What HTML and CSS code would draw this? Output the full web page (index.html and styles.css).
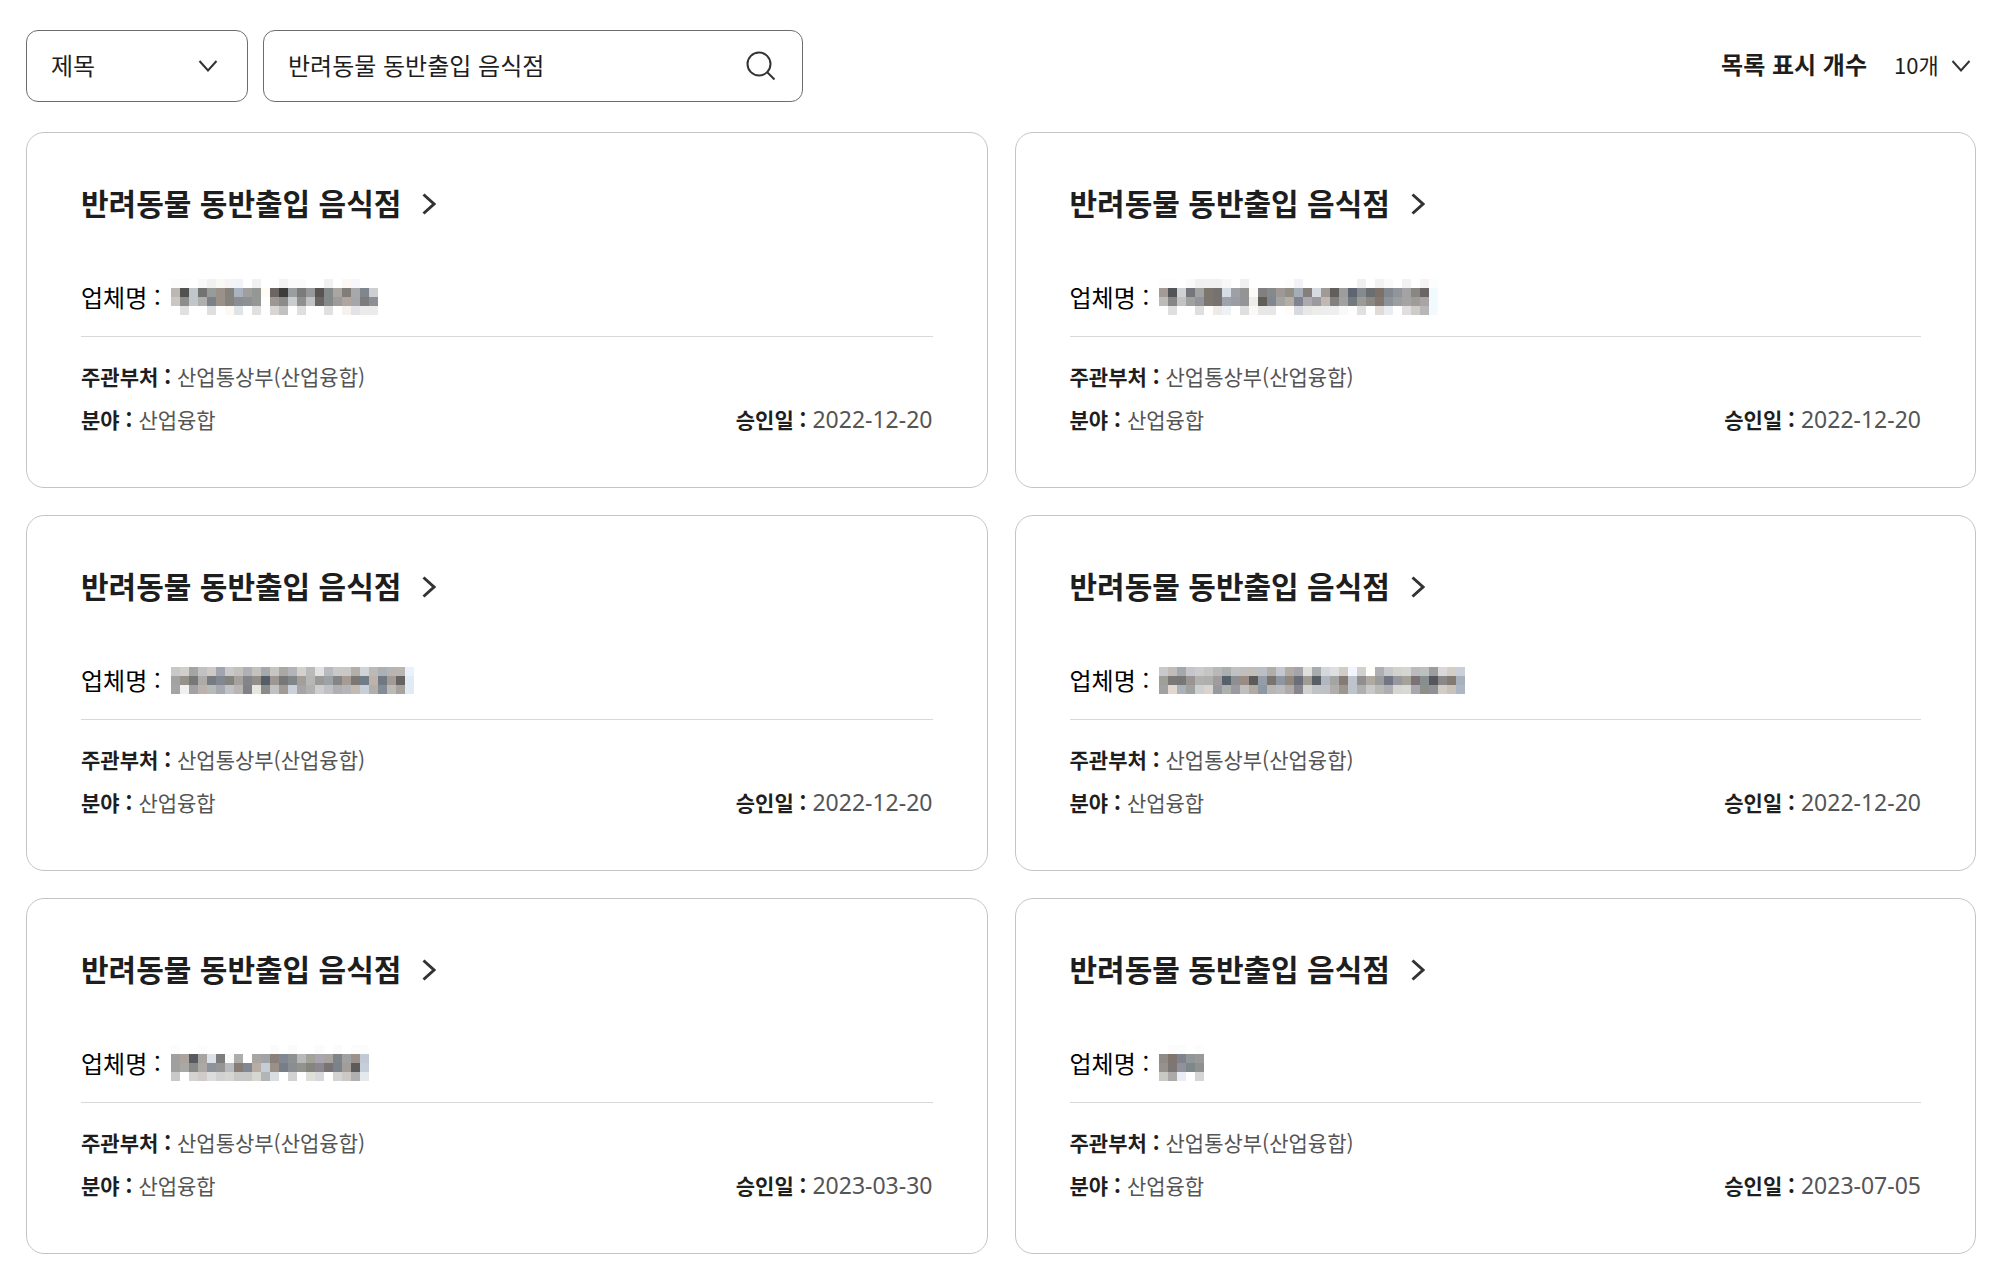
FILE: index.html
```html
<!DOCTYPE html>
<html lang="ko">
<head>
    <meta charset="UTF-8">
    <meta name="viewport" content="width=device-width, initial-scale=1.0">
    <title>반려동물 동반출입 음식점</title>
    <link rel="stylesheet" href="styles.css">
</head>
<body>
    <main class="container">
        <form class="toolbar">
            <div class="select-box">
                <select id="searchType" aria-label="검색 구분">
                    <option selected>제목</option>
                    <option>업체명</option>
                </select>
                <svg class="arrow" viewBox="0 0 20 14" aria-hidden="true"><path d="M1.500 2 10 11.500 18.500 2"/></svg>
            </div>
            <div class="search-box">
                <input type="text" id="keyword" value="반려동물 동반출입 음식점" aria-label="검색어">
                <button type="submit" class="search-btn" aria-label="검색">
                    <svg viewBox="0 0 30 30" aria-hidden="true"><circle cx="13" cy="13" r="11.500"/><path d="M21 21 28.500 28.500"/></svg>
                </button>
            </div>
            <div class="count-box">
                <label for="pageSize">목록 표시 개수</label>
                <div class="count-select">
                    <select id="pageSize">
                        <option selected>10개</option>
                        <option>20개</option>
                    </select>
                    <svg class="arrow" viewBox="0 0 20 14" aria-hidden="true"><path d="M1.500 2 10 11.500 18.500 2"/></svg>
                </div>
            </div>
        </form>

        <ul class="card-list">
            <li class="card">
                <h2><a href="#">반려동물 동반출입 음식점 <svg viewBox="0 0 14 22" aria-hidden="true"><path d="M1.500 1.500 12 11 1.500 20.500"/></svg></a></h2>
                <p class="company">업체명 : <svg class="mosaic" data-name="a"></svg></p>
                <dl class="info">
                    <div class="full"><dt>주관부처 :</dt><dd>산업통상부(산업융합)</dd></div>
                    <div><dt>분야 :</dt><dd>산업융합</dd></div>
                    <div><dt>승인일 :</dt><dd class="date">2022-12-20</dd></div>
                </dl>
            </li>
            <li class="card">
                <h2><a href="#">반려동물 동반출입 음식점 <svg viewBox="0 0 14 22" aria-hidden="true"><path d="M1.500 1.500 12 11 1.500 20.500"/></svg></a></h2>
                <p class="company">업체명 : <svg class="mosaic" data-name="b"></svg></p>
                <dl class="info">
                    <div class="full"><dt>주관부처 :</dt><dd>산업통상부(산업융합)</dd></div>
                    <div><dt>분야 :</dt><dd>산업융합</dd></div>
                    <div><dt>승인일 :</dt><dd class="date">2022-12-20</dd></div>
                </dl>
            </li>
            <li class="card">
                <h2><a href="#">반려동물 동반출입 음식점 <svg viewBox="0 0 14 22" aria-hidden="true"><path d="M1.500 1.500 12 11 1.500 20.500"/></svg></a></h2>
                <p class="company">업체명 : <svg class="mosaic" data-name="c"></svg></p>
                <dl class="info">
                    <div class="full"><dt>주관부처 :</dt><dd>산업통상부(산업융합)</dd></div>
                    <div><dt>분야 :</dt><dd>산업융합</dd></div>
                    <div><dt>승인일 :</dt><dd class="date">2022-12-20</dd></div>
                </dl>
            </li>
            <li class="card">
                <h2><a href="#">반려동물 동반출입 음식점 <svg viewBox="0 0 14 22" aria-hidden="true"><path d="M1.500 1.500 12 11 1.500 20.500"/></svg></a></h2>
                <p class="company">업체명 : <svg class="mosaic" data-name="d"></svg></p>
                <dl class="info">
                    <div class="full"><dt>주관부처 :</dt><dd>산업통상부(산업융합)</dd></div>
                    <div><dt>분야 :</dt><dd>산업융합</dd></div>
                    <div><dt>승인일 :</dt><dd class="date">2022-12-20</dd></div>
                </dl>
            </li>
            <li class="card">
                <h2><a href="#">반려동물 동반출입 음식점 <svg viewBox="0 0 14 22" aria-hidden="true"><path d="M1.500 1.500 12 11 1.500 20.500"/></svg></a></h2>
                <p class="company">업체명 : <svg class="mosaic" data-name="e"></svg></p>
                <dl class="info">
                    <div class="full"><dt>주관부처 :</dt><dd>산업통상부(산업융합)</dd></div>
                    <div><dt>분야 :</dt><dd>산업융합</dd></div>
                    <div><dt>승인일 :</dt><dd class="date">2023-03-30</dd></div>
                </dl>
            </li>
            <li class="card">
                <h2><a href="#">반려동물 동반출입 음식점 <svg viewBox="0 0 14 22" aria-hidden="true"><path d="M1.500 1.500 12 11 1.500 20.500"/></svg></a></h2>
                <p class="company">업체명 : <svg class="mosaic" data-name="f"></svg></p>
                <dl class="info">
                    <div class="full"><dt>주관부처 :</dt><dd>산업통상부(산업융합)</dd></div>
                    <div><dt>분야 :</dt><dd>산업융합</dd></div>
                    <div><dt>승인일 :</dt><dd class="date">2023-07-05</dd></div>
                </dl>
            </li>
        </ul>
    </main>
    <script src="mosaic.js"></script>
</body>
</html>
```
FILE: styles.css
```css
* {
    box-sizing: border-box;
}
body {
    margin: 0;
    background-color: #fff;
    color: #1e1e1e;
    font-family: "Noto Sans CJK KR", sans-serif;
    font-size: 24px;
}
.container {
    padding: 30px 29px 24px 26px;
}
.toolbar {
    display: flex;
    align-items: center;
    gap: 15px;
    margin-bottom: 30px;
}
select, input, button {
    appearance: none;
    border: 0;
    padding: 0;
    background: none;
    color: inherit;
    font: inherit;
    outline: none;
}
svg {
    fill: none;
    stroke: #333;
    stroke-width: 2;
}
.select-box, .count-select {
    display: grid;
    align-items: center;
}
.select-box {
    width: 222px;
}
.select-box > *, .count-select > * {
    grid-area: 1 / 1;
}
.select-box select {
    height: 72px;
    padding: 0 24px 4px;
    border: 1px solid #6d6d6d;
    border-radius: 12px;
}
.arrow {
    width: 20px;
    height: 14px;
    justify-self: end;
    pointer-events: none;
}
.select-box .arrow {
    margin-right: 30px;
}
.search-box {
    display: flex;
    align-items: center;
    width: 540px;
    height: 72px;
    padding: 0 26px 0 24px;
    border: 1px solid #6d6d6d;
    border-radius: 12px;
}
.search-box input {
    flex: 1;
    min-width: 0;
    padding-bottom: 4px;
}
.search-btn {
    display: flex;
    cursor: pointer;
}
.search-btn svg {
    width: 30px;
    height: 30px;
}
.count-box {
    display: flex;
    align-items: center;
    gap: 27px;
    margin-left: auto;
    padding-right: 5px;
}
.count-box label {
    padding-bottom: 6px;
    font-weight: bold;
}
.count-select select {
    padding: 0 32px 4px 0;
    font-size: 22px;
}
.card-list {
    display: grid;
    grid-template-columns: 1fr 1fr;
    gap: 27px;
    margin: 0;
    padding: 0;
    list-style: none;
}
.card {
    padding: 47px 54px 46px;
    border: 1px solid #c4c4c4;
    border-radius: 18px;
}
.card h2 {
    margin: 0 0 53px;
    font-size: 30px;
    line-height: 44px;
}
.card a {
    display: flex;
    align-items: center;
    gap: 21px;
    width: fit-content;
    color: inherit;
    text-decoration: none;
}
.card a svg {
    width: 14px;
    height: 22px;
    margin-top: 4px;
    stroke-width: 3;
}
.company {
    display: flex;
    align-items: center;
    gap: 10px;
    margin: 0 0 18px;
    padding-bottom: 19px;
    border-bottom: 1px solid #d8d8d8;
    color: #000;
    line-height: 40px;
}
.mosaic {
    stroke: none;
}
.info {
    display: grid;
    grid-template-columns: 1fr auto;
    margin: 0;
    font-size: 21px;
    line-height: 43px;
}
.info div {
    display: flex;
    gap: 6px;
}
.info .full {
    grid-column: 1 / -1;
}
.info dt {
    font-weight: bold;
}
.info dd {
    margin: 0;
    color: #555;
}
.info .date {
    font-family: "Noto Sans", sans-serif;
    font-size: 23px;
}
@media (max-width: 1100px) {
    .toolbar {
        flex-wrap: wrap;
    }
    .card-list {
        grid-template-columns: 1fr;
    }
}
```
FILE: mosaic.js
```js
// 업체명 모자이크: 한 칸 9px, 줄마다 색상 목록
const CELL = 9;
const mosaics = {
    a: [
        'fcfcfc fcfcfc ffffff f9f9f9 f1f1f1 faf8f5 f5f3f3 f0f3f8 ffffff f1f1f1 ffffff ffffff f3f3f1 fbfbfb fbfbfb ffffff ffffff f1f1f1 ffffff fdf8f5 f5f7fb ffffff ffffff',
        'beb7b1 515151 c0c6ca 737373 979c9b 9b9189 85817b a9b2be 9f9f9f 959795 fffaf3 6b6564 3c3c3c 9a9ea1 7b7b79 979899 5b5252 84898a aaa6a2 817d78 a8a8ab 80858f ceced3',
        'c8c7c3 8d8d8d c1c6ca afafad 7b8185 9b9189 86827c 8a8e94 8d9194 959795 ffffff 9b9792 8b8b8b c9cdd0 8f8f8f c2c2c2 686664 858a89 9f9b98 b1a69f a5a6aa 7d7c7c 8d8f96',
        'ffffff e0e0e0 ffffff ffffff dfdfdf ffffff fdf9f4 dfe4e8 ffffff e0e0e0 ffffff d9d5d2 c0c1c3 ffffff dfdfdf ffffff ffffff e0e0e0 ffffff f8f2ef e2e2e8 ebebeb ebebeb'
    ],
    b: [
        'fdfdfd fdfdfd ffffff fafafa f0f0f0 f1f1f0 f1f1f1 f8f8f8 ffffff f0f0f0 ffffff ffffff ffffff ffffff fdfdfd f1f3f6 ffffff ffffff ffffff ffffff ffffff ffffff f0f0f0 ffffff f2f2f2 fafafa ffffff f2f2f2 ffffff f5f3f3 fbfeff',
        'a39b96 525456 d0d1d3 74767b a2a2a2 7d766e 76726f d6dce3 9fa0a6 949494 fbfaf7 808080 86898b 9d9996 938e87 a5adb7 857e7a d6dbe2 9f9a95 625e5b 9d9d9e 606671 858a8f 6b6e6e 7c7168 82888d 91959b a3a3a3 888784 6c6465 f0faff',
        'bcbbb8 868686 c3c3c3 a0a0a0 91949b 7d766e 76726f 9fa2aa 9b9da6 949494 efede8 615e58 808790 a3a3a2 b5aea7 81848e aaaab0 9a9a9f c3b8b1 83807e a1a1a3 737b7e 9b9b99 8c8982 81776e 8c939b 9b9fa2 a5a4a2 9f9b98 a8a5a4 f0faff',
        'ffffff dfdfdf ffffff ffffff dfdfdf ffffff eeeae7 eef2f7 ffffff dfdfdf fbf9f7 e7e7e7 e7e7e7 ffffff fffbf8 d7dae0 e8e8e8 ececeb ededed eeeeee f9f9f9 ffffff e0e0e0 ffffff e0dbd8 e9edf1 ffffff dfdfdf ceccc8 b7b7b7 f3faff'
    ],
    c: [
        'c8c8c8 d0cfca a4a4a4 c1c1c3 cccac6 a0a5af c9c9c9 c4c0bd aeb0b5 c3c2be a4a8af c8c4c0 a8a8a7 b2b4b7 d3d0ce bababa e3e2e0 b7bbc0 c9c9c9 cac8c5 b2aeaa d0d4d7 bbbab6 abb0b4 b8b4b1 b9b6b2 ebf1fb',
        'a2a2a2 969189 777978 adaba7 777c80 838792 84837f a5a29e 83858a 928e88 555d69 9d9793 777777 818689 a39e99 b7b7b7 9a9a9b 9da2a5 858585 a69b95 7c7773 707c87 bfb3a9 707883 a49a93 656463 e1ebf5',
        'a4a4a4 f1f0ee a2a2a2 bcb2ad b8baba a6a9b0 bfc2c6 b8b6b4 808287 e8e5e1 8b8b8b c1c1c1 a39a94 cad1da a6a5a5 b1b1b1 cecfcd bfc1c5 aeb0b3 b5b5b7 c3bab2 c6ced7 b2aeaa 848b96 bcb9b7 a8a29c e1ebf5'
    ],
    d: [
        'c9c9cb c0bdb9 a5a8aa c4c6cb cfcbc8 c5c6c3 b8b7b9 abafad bfc1c4 c1bfbd c3bdb8 bbbfc3 afaeaa c4c7ce b3aba6 a5a4ab dfdfdd a9acad d4d7dc dedfe1 d2ccc7 f0f5ff d0d0ce fefefa aeafb0 c6c8cb d5d1cc d5d6d2 bbbbbf bbc0c0 9d9d9f d9d9db d4cec8 cacfd8',
        '9f9f9a 7b7978 767777 9a9393 b1b1b2 adb0af a29b9d 56626b 8d8f93 9a8c82 5a5a5a 949da7 7a746e 8e96a2 90887d 6b6e7a a09c94 596065 b2b6c0 a4a4a3 857a76 bfc3cc 8f8f8f aeaaa1 9c9b9b 717682 97989f a3a39b 7c7274 868e90 56575c 8b8988 847a71 a7b1bc',
        'a1a1a1 e2d8d2 abb1b9 a1a1a1 cdd0d0 d9d4cd 9898a0 aeb0ae 9a9ba0 c0bfbe b0aaa4 8e98a3 b7b6b7 babbbd b0aba9 88868d d2d3d0 c0c2c5 bdc1c6 b2adaa 9b9690 bfc3cc afafaf c8c8c8 b9b9b7 aeafb3 d8d4d2 d7dad4 a9a8b1 8e8f88 8f9194 d0ccc6 c8c2bb adb6c2'
    ],
    e: [
        'fcfcfc ffffff ffffff fcfcfc ffffff ffffff ffffff ffffff ffffff ffffff ffffff fbfbfb ffffff fbfbfb ffffff ffffff fbfbfb ffffff fbfbfb ffffff fcfcfc fcfcfc',
        'a0a0a0 aca39c 575a5e a8a4a2 dde2ea 7d7d7c fafafa adadad ffffff aaa5a1 a0a3a8 89807a 828893 8d9192 b7bab8 a4a39b a9a6b1 a9a4a1 7e8588 a1a0a2 9d928b c2c9d6',
        'a0a0a0 a8a8a5 888888 aca8a5 8d929b 959595 b9bcbe 877d76 828893 b7ada6 c5ccd5 9a9088 787e87 8a8e91 93928c 84857e 8d868e 787476 7a828a a19d97 5c5b59 c6ced9',
        'c8c8c8 ffffff d4d3d2 d0cbc8 dcdcdc d1d1d1 d5d5d1 c8c8c8 c8c8c8 d7d7d2 b0b5b5 d9dde0 ffffff d2d2d2 ffffff e0e0db d8d7dc ffffff d3d3d3 cbc8c5 b0b0b0 e4e9ed'
    ],
    f: [
        'ffffff fcfcfc fcfcfc ffffff fcfcfc',
        '8f8b86 7e766f 80838c 919698 999999',
        '96918c 7c7774 90919a 7e8889 909090',
        'c8c8c5 abaaa9 e9edf5 ffffff d5d5d5'
    ]
};

document.querySelectorAll('.mosaic').forEach(function(svg) {
    const rows = mosaics[svg.dataset.name].map(row => row.split(' '));
    svg.setAttribute('width', rows[0].length * CELL);
    svg.setAttribute('height', rows.length * CELL);
    rows.forEach(function(colors, y) {
        colors.forEach(function(color, x) {
            const rect = document.createElementNS('http://www.w3.org/2000/svg', 'rect');
            rect.setAttribute('x', x * CELL);
            rect.setAttribute('y', y * CELL);
            rect.setAttribute('width', CELL);
            rect.setAttribute('height', CELL);
            rect.setAttribute('fill', '#' + color);
            svg.appendChild(rect);
        });
    });
});
```
